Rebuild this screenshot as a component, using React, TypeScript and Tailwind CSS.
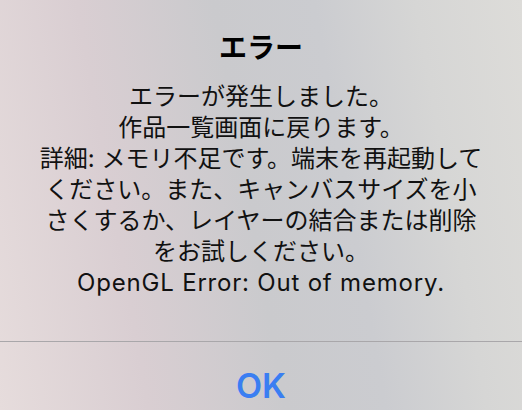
import React from "react";

const messageLines = [
  "エラーが発生しました。",
  "作品一覧画面に戻ります。",
  "詳細: メモリ不足です。端末を再起動して",
  "ください。また、キャンバスサイズを小",
  "さくするか、レイヤーの結合または削除",
  "をお試しください。",
];

export default function App() {
  return (
    <div className="w-[522px] h-[410px] overflow-hidden flex flex-col bg-[linear-gradient(80deg,#e6dcdc_0%,#d9ced2_25%,#cacacd_48%,#cbccd0_65%,#d6d6d5_82%,#dddcd9_100%)] font-['Inter','Noto_Sans_CJK_JP',sans-serif] text-center">
      {/* title + message */}
      <div className="flex-1 flex flex-col items-center pt-[30px]">
        <h1 className="text-[28px] leading-[36px] font-bold text-black">エラー</h1>
        <div className="mt-[15px] text-[24px] leading-[31px] text-[#111] whitespace-nowrap">
          {messageLines.map((line, i) => (
            <div key={i}>{line}</div>
          ))}
          <div className="tracking-[0.8px]">OpenGL Error: Out of memory.</div>
        </div>
      </div>

      {/* action */}
      <div className="h-[69px] pt-[20px] border-t border-[#a9a7aa] flex items-center justify-center">
        <span className="text-[34px] leading-none font-semibold text-[#3a7ef2]">OK</span>
      </div>
    </div>
  );
}
